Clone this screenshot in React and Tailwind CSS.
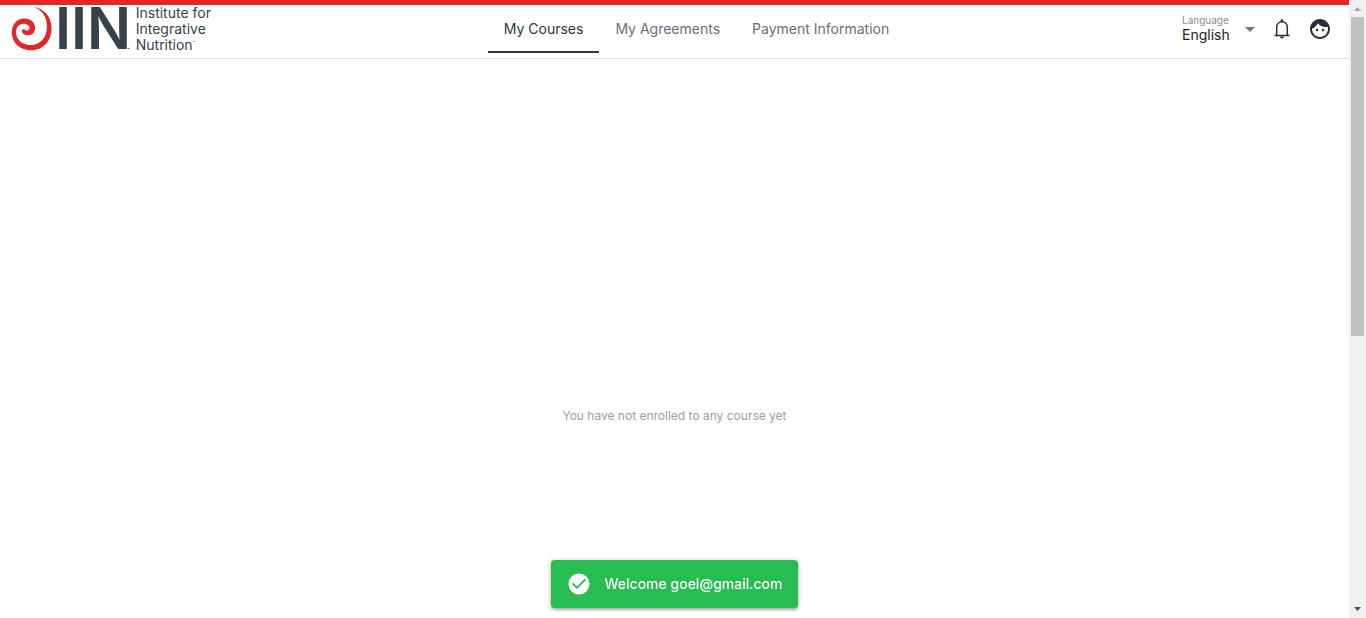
import React from "react";

function SpiralMark() {
  return (
    <svg viewBox="18 18 124 137" className="h-[45px] w-[41px] shrink-0" aria-hidden="true">
      <path
        fill="#df2928"
        d="M85 20C120 26 141 51 141 86C141 126 114 153 80 153C45 153 20 132 20 99C20 74 36 56 58 56C78 56 91 68 91 84C91 98 82 107 70 107C59 107 51 101 51 94C51 87 58 86 61 91C65 96 74 91 74 85C74 77 66 72 56 72C42 72 33 83 33 98C33 121 52 137 77 137C107 137 127 113 127 81C127 50 112 29 85 20Z"
      />
    </svg>
  );
}

function Logo() {
  return (
    <a
      href="#home"
      className="flex h-[53px] w-[200px] items-center pb-1.5 text-[#36424b]"
      aria-label="Institute for Integrative Nutrition"
    >
      <SpiralMark />
      <span className="ml-[3px] flex h-[45px] items-baseline text-[58px]/[45px] font-semibold">
        IIN
        <span className="-ml-1 text-[8px]/3">.</span>
      </span>
      <span className="ml-1.5 whitespace-nowrap text-sm/4">
        <span className="block">Institute for</span>
        <span className="block">Integrative</span>
        <span className="flex items-start">
          Nutrition<span className="text-[4px]/3">™</span>
        </span>
      </span>
    </a>
  );
}

const tabs = [
  { label: "My Courses", href: "#courses", active: true },
  { label: "My Agreements", href: "#agreements", active: false },
  { label: "Payment Information", href: "#payment", active: false },
];

function Tabs() {
  return (
    <nav className="flex h-12">
      {tabs.map((tab) => (
        <a
          key={tab.label}
          href={tab.href}
          aria-current={tab.active ? "page" : undefined}
          className={
            tab.active
              ? "flex items-center whitespace-nowrap border-b-2 border-[#2c3742] px-4 pt-0.5 text-sm text-[#2c3742]"
              : "flex items-center whitespace-nowrap border-b-2 border-transparent px-4 pt-0.5 text-sm text-[#677078]"
          }
        >
          {tab.label}
        </a>
      ))}
    </nav>
  );
}

function HeaderActions() {
  return (
    <div className="flex items-center text-[#24303a]">
      <div className="flex items-center">
        <div className="flex flex-col gap-px pb-0.5">
          <label htmlFor="language" className="text-[10px]/3 text-[#8b8b8b]">
            Language
          </label>
          <select id="language" defaultValue="en" className="w-14 appearance-none bg-transparent text-sm/4 text-[#222222]">
            <option value="en">English</option>
          </select>
        </div>
        <svg viewBox="0 0 24 24" className="size-6 fill-[#757575]" aria-hidden="true">
          <path d="M7 10l5 5 5-5z" />
        </svg>
      </div>
      <button type="button" aria-label="Notifications" className="ml-2">
        <svg viewBox="0 0 24 24" className="size-6">
          <path
            d="M4.500 18.500h15M6.700 18.500V10.500C6.700 7 9 4.800 12 4.800s5.300 2.200 5.300 5.700v8"
            fill="none"
            stroke="currentColor"
            strokeWidth="1.500"
          />
          <path d="M10.700 5V3.600a1.300 1.300 0 0 1 2.600 0V5zM10 19.500h4a2 2 0 0 1-4 0z" fill="currentColor" />
        </svg>
      </button>
      <button type="button" aria-label="Account" className="ml-3.5">
        <svg viewBox="0 0 24 24" className="size-6 fill-current">
          <path d="M10.250 13c0 .69-.56 1.250-1.250 1.250S7.750 13.690 7.750 13s.56-1.250 1.250-1.250 1.250.56 1.250 1.250zM15 11.750c-.69 0-1.250.56-1.250 1.250s.56 1.250 1.250 1.250 1.250-.56 1.250-1.250-.56-1.250-1.250-1.250zm7 .25c0 5.520-4.480 10-10 10S2 17.520 2 12 6.480 2 12 2s10 4.480 10 10zm-2 0c0-.78-.12-1.530-.33-2.240-.7.150-1.420.240-2.170.240-3.130 0-5.920-1.440-7.760-3.690C8.690 8.870 6.600 10.880 4 11.860c.010.040 0 .090 0 .140 0 4.410 3.590 8 8 8s8-3.590 8-8z" />
        </svg>
      </button>
    </div>
  );
}

function Toast() {
  return (
    <div role="status" className="fixed inset-x-0 bottom-2.5 mr-[17px] flex justify-center">
      <div className="flex h-12 items-center gap-3.5 rounded bg-[#28bd52] px-4 text-white shadow-[0_1px_5px_rgba(0,0,0,0.3),0_2px_2px_rgba(0,0,0,0.15)]">
        <svg viewBox="0 0 24 24" className="size-6 fill-current" aria-hidden="true">
          <path d="M12 1.500a10.500 10.500 0 1 0 0 21 10.500 10.500 0 0 0 0-21zM10 17l-5-5 1.200-1.200L10 14.600l7.800-7.800L19 8l-9 9z" />
        </svg>
        <span className="text-sm font-medium">Welcome goel@gmail.com</span>
      </div>
    </div>
  );
}

function ScrollTrack() {
  return (
    <div className="flex w-[17px] shrink-0 flex-col items-center bg-[#f1f1f1]" aria-hidden="true">
      <svg viewBox="0 0 17 17" className="size-[17px] shrink-0 fill-[#a3a3a3]">
        <path d="M5 11h7L8.500 7z" />
      </svg>
      <div className="flex w-[13px] flex-1">
        <div className="h-[54.6%] w-full bg-[#c1c1c1]" />
      </div>
      <svg viewBox="0 0 17 17" className="size-[17px] shrink-0 fill-[#505050]">
        <path d="M5 6h7l-3.500 4z" />
      </svg>
    </div>
  );
}

export default function App() {
  return (
    <div className="flex h-screen bg-white font-['Inter','Liberation_Sans',sans-serif]">
      <div className="flex min-w-0 flex-1 flex-col">
        <header className="flex items-start justify-between border-b border-[#e0e0e0] border-t-[5px] border-t-[#e12827] pl-[11px] pr-[17px]">
          <Logo />
          <Tabs />
          <div className="flex h-12 items-center">
            <HeaderActions />
          </div>
        </header>
        <main className="flex flex-1 items-center justify-center pt-[154px]">
          <p className="text-xs text-[#9e9e9e]">You have not enrolled to any course yet</p>
        </main>
      </div>
      <ScrollTrack />
      <Toast />
    </div>
  );
}
